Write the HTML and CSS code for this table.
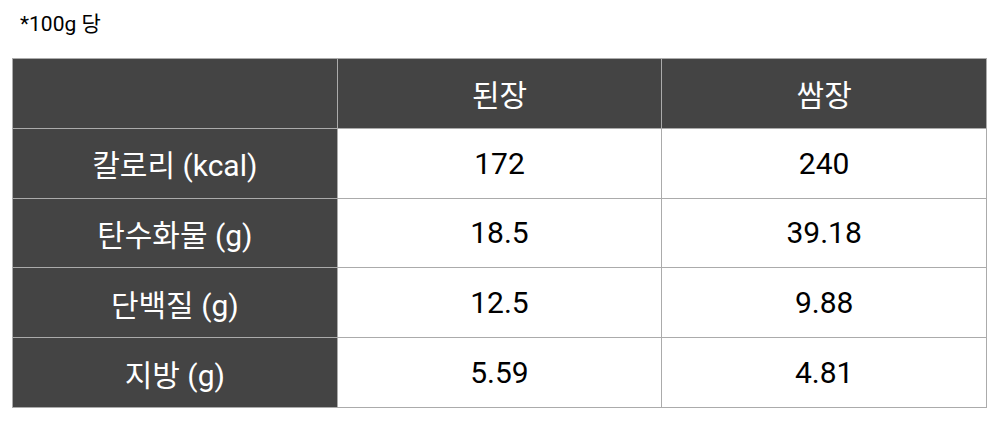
FILE: index.html
```html
<!DOCTYPE html>
<html lang="ko">
<head>
<meta charset="utf-8">
<link rel="stylesheet" href="styles.css">
</head>
<body>
<div class="page">
  <p class="note">*100g 당</p>
  <table class="nutrition">
    <colgroup><col class="c"><col class="c"><col class="c"></colgroup>
    <thead>
      <tr><th></th><th>된장</th><th>쌈장</th></tr>
    </thead>
    <tbody>
      <tr><th>칼로리 (kcal)</th><td>172</td><td>240</td></tr>
      <tr><th>탄수화물 (g)</th><td>18.5</td><td>39.18</td></tr>
      <tr><th>단백질 (g)</th><td>12.5</td><td>9.88</td></tr>
      <tr><th>지방 (g)</th><td>5.59</td><td>4.81</td></tr>
    </tbody>
  </table>
</div>
</body>
</html>
```

FILE: styles.css
```css
html, body {
  margin: 0;
  padding: 0;
  background: #ffffff;
}
body {
  font-family: "Roboto", "Noto Sans CJK KR", sans-serif;
  color: #000;
}
.page {
  padding: 9px 11px 0 12px;
}
.note {
  margin: 0 0 19px 8px;
  font-size: 21px;
  line-height: 30px;
}
.nutrition {
  width: 975px;
  table-layout: fixed;
  border-collapse: collapse;
  border: 1px solid #ababab;
  font-size: 30px;
}
.nutrition .c {
  width: 33.333%;
}
.nutrition th,
.nutrition td {
  border: 1px solid #ababab;
  height: 69.8px;
  padding: 0;
  text-align: center;
  vertical-align: middle;
  font-weight: 400;
  box-sizing: border-box;
}
.nutrition th {
  background: #444444;
  color: #ffffff;
}
.nutrition td {
  background: #ffffff;
  color: #000000;
}
```
